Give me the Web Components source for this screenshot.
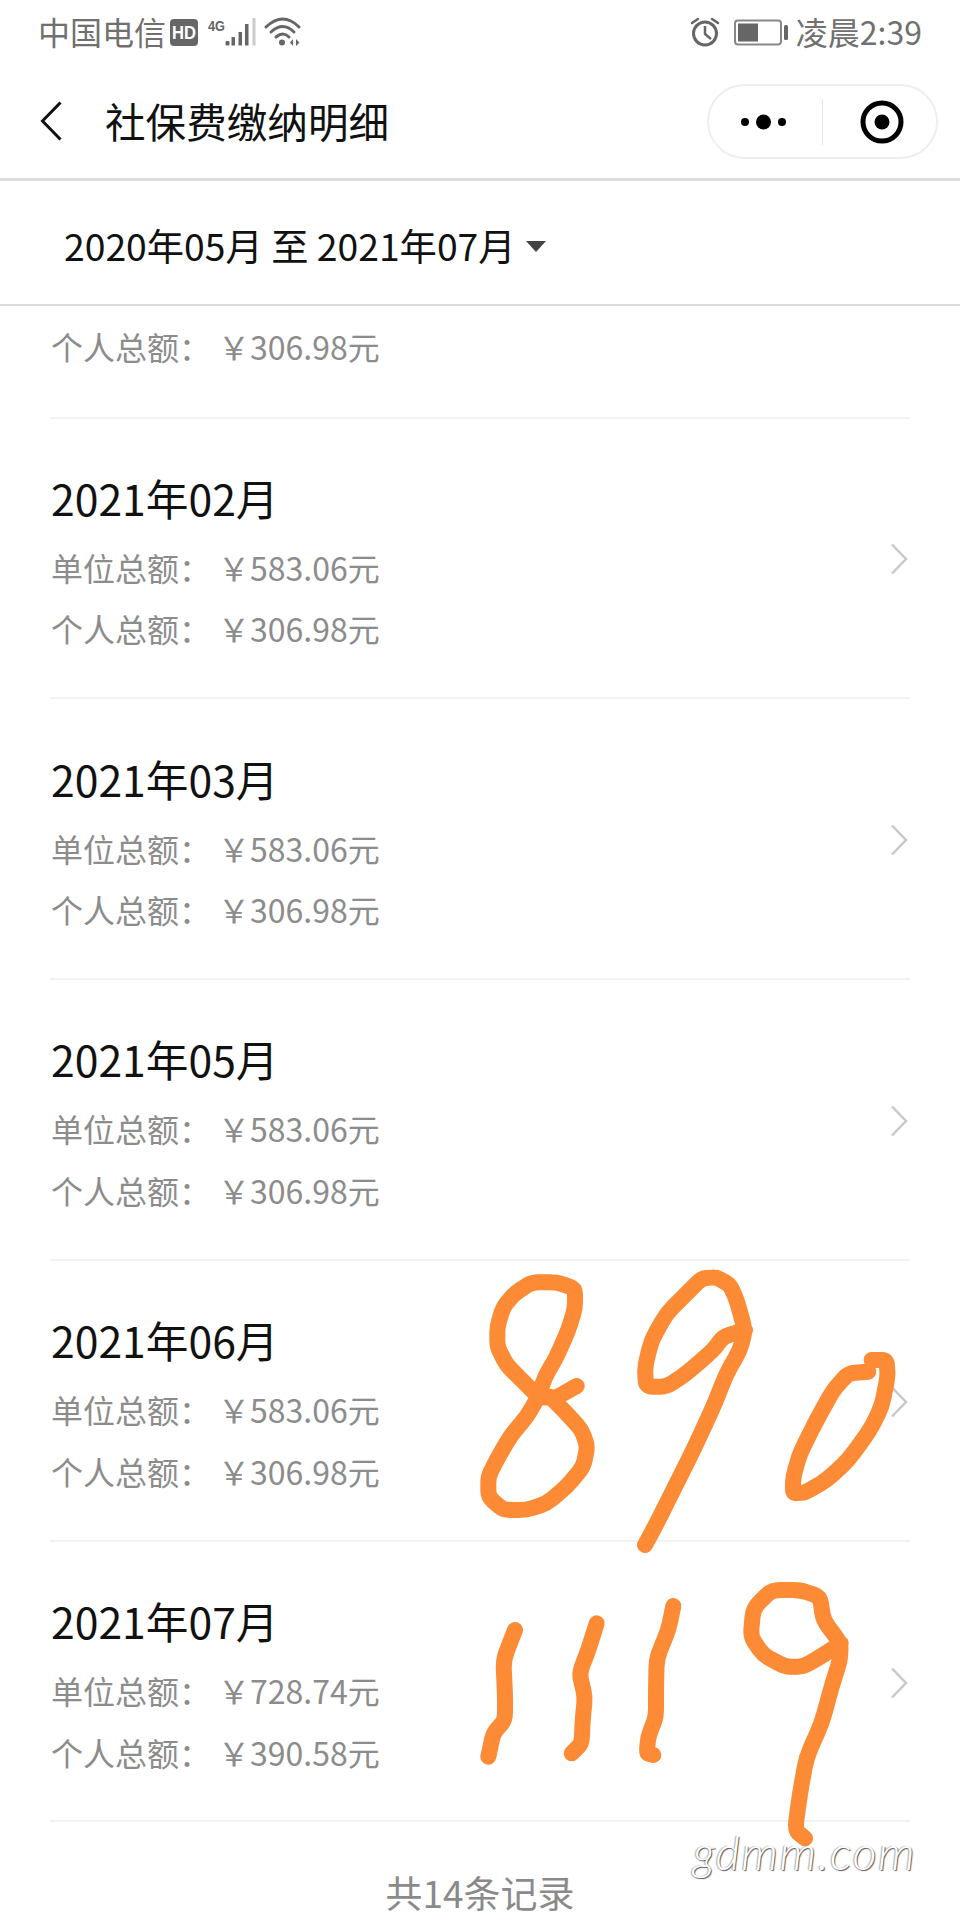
<!DOCTYPE html>
<html lang="zh">
<head>
<meta charset="utf-8">
<title>社保费缴纳明细</title>
<style>
    html, body { margin: 0; padding: 0; background: #fff; }
    body { width: 960px; height: 1920px; overflow: hidden; position: relative; font-family: "Noto Sans CJK SC", "Noto Sans", sans-serif; }
</style>
</head>
<body>
<status-bar></status-bar>
<nav-bar>社保费缴纳明细</nav-bar>
<date-filter>2020年05月 至 2021年07月</date-filter>
<record-list>
    <record-row partial personal="306.98"></record-row>
    <record-row month="2021年02月" company="583.06" personal="306.98"></record-row>
    <record-row month="2021年03月" company="583.06" personal="306.98"></record-row>
    <record-row month="2021年05月" company="583.06" personal="306.98"></record-row>
    <record-row month="2021年06月" company="583.06" personal="306.98"></record-row>
    <record-row month="2021年07月" company="728.74" personal="390.58"></record-row>
    <list-footer>共14条记录</list-footer>
</record-list>
<hand-scribble></hand-scribble>
<water-mark>gdmm.com</water-mark>

<script>
// status bar on top, grey icons
class StatusBar extends HTMLElement {
    constructor() {
        super();
        this.shadow = this.attachShadow({ mode: 'open' });
    }

    connectedCallback() {
        this.shadow.innerHTML = `
            <style>
                :host { display: flex; justify-content: space-between; align-items: center; height: 64px; padding: 0 38px; color: #707070; font-size: 32px; line-height: 40px; }
                .side { display: flex; align-items: center; }
                .txt { margin-top: -2px; }
                svg { display: block; }
            </style>
            <div class="side">
                <span class="txt">中国电信</span>
                <svg style="margin-left:4px" width="132" height="40" viewBox="170 12 132 40">
                    <rect x="170" y="19" width="28" height="27" rx="4" fill="#666"/>
                    <text x="184" y="39" text-anchor="middle" font-family="Liberation Sans" font-weight="700" font-size="19" textLength="24" lengthAdjust="spacingAndGlyphs" fill="#fff">HD</text>
                    <text x="208" y="31" font-family="Liberation Sans" font-weight="700" font-size="15" textLength="17" lengthAdjust="spacingAndGlyphs" fill="#666">4G</text>
                    <g fill="#666">
                        <rect x="225.500" y="41" width="4" height="4.500" rx="1"/>
                        <rect x="231.500" y="37" width="3.500" height="8.500"/>
                        <rect x="238.500" y="32" width="3.500" height="13.500"/>
                        <rect x="245" y="24" width="3.500" height="21.500"/>
                    </g>
                    <rect x="252.500" y="18" width="3" height="27.500" fill="#ccc"/>
                    <g fill="none" stroke="#666" stroke-width="3" stroke-linecap="round">
                        <path d="M266 27 Q283 11 299 27"/>
                        <path d="M271 32 Q283 21 294 32"/>
                        <path d="M276 37 Q283 31 289 37"/>
                    </g>
                    <circle cx="282" cy="42.500" r="3" fill="#666"/>
                    <path d="M293 39v7l-3-3.500zM296 39v7l3.500-3.500z" fill="#666"/>
                </svg>
            </div>
            <div class="side">
                <svg width="98" height="40" viewBox="690 12 98 40">
                    <g fill="none" stroke="#666">
                        <circle cx="705" cy="33.500" r="11.500" stroke-width="3"/>
                        <path d="M705 26v8l6 5" stroke-width="2.500"/>
                        <path d="M692 23l6-4M718 23l-6-4" stroke-width="2.500" stroke-linecap="round"/>
                        <rect x="735" y="20.500" width="46" height="24" rx="3" stroke="#888" stroke-width="2"/>
                    </g>
                    <rect x="738" y="23.500" width="20" height="18" fill="#666"/>
                    <rect x="784" y="25" width="4" height="15" rx="1.500" fill="#666"/>
                </svg>
                <span class="txt" style="margin-left:8px">凌晨2:39</span>
            </div>
        `;
    }
}

class NavBar extends HTMLElement {
    constructor() {
        super();
        this.shadow = this.attachShadow({ mode: 'open' });
    }

    connectedCallback() {
        this.shadow.innerHTML = `
            <style>
                :host { display: flex; align-items: center; height: 114px; border-bottom: 3px solid #dcdcdc; padding: 0 22px 0 40px; color: #111; }
                .title { font-size: 40.600px; line-height: 56px; margin-left: 43px; flex: 1; }
                svg { display: block; }
                .capsule { display: flex; align-items: center; box-sizing: border-box; width: 231px; height: 75px; border: 2px solid #eee; border-radius: 38px; margin-top: 1px; }
                .cell { box-sizing: border-box; width: 113px; flex: none; display: flex; justify-content: center; }
                .cell.left { padding-right: 3px; }
                .cell.right { padding-left: 5px; }
                .sep { width: 1px; height: 46px; flex: none; background: #e6e6e6; }
            </style>
            <svg width="22" height="40" viewBox="0 0 22 40"><path d="M20.500 1.500L2.500 20l18 18.500" fill="none" stroke="#111" stroke-width="3"/></svg>
            <span class="title"><slot></slot></span>
            <div class="capsule">
                <div class="cell left">
                    <svg width="46" height="16" viewBox="0 0 46 16" fill="#000"><circle cx="4" cy="8" r="4"/><circle cx="22.500" cy="8" r="7.500"/><circle cx="41" cy="8" r="4"/></svg>
                </div>
                <div class="sep"></div>
                <div class="cell right">
                    <svg width="44" height="44" viewBox="0 0 44 44"><circle cx="22" cy="22" r="19" fill="none" stroke="#000" stroke-width="5"/><circle cx="22" cy="22" r="7.500" fill="#000"/></svg>
                </div>
            </div>
        `;
    }
}

class DateFilter extends HTMLElement {
    constructor() {
        super();
        this.shadow = this.attachShadow({ mode: 'open' });
    }

    connectedCallback() {
        this.shadow.innerHTML = `
            <style>
                :host { display: flex; align-items: center; height: 119px; padding: 4px 0 0 64px; border-bottom: 2px solid #dcdcdc; font-size: 37.300px; color: #111; }
                .caret { width: 0; height: 0; margin: 4px 0 0 10px; border-left: 10px solid transparent; border-right: 10px solid transparent; border-top: 11px solid #444; }
            </style>
            <span><slot></slot></span>
            <span class="caret"></span>
        `;
    }
}

class RecordList extends HTMLElement {
    constructor() {
        super();
        this.shadow = this.attachShadow({ mode: 'open' });
    }

    connectedCallback() {
        this.shadow.innerHTML = `
            <style>
                :host { display: block; height: 1614px; overflow: hidden; padding: 0 50px; box-sizing: border-box; }
            </style>
            <slot></slot>
        `;
    }
}

class RecordRow extends HTMLElement {
    constructor() {
        super();
        this.shadow = this.attachShadow({ mode: 'open' });
    }

    connectedCallback() {
        const month = this.getAttribute('month');
        const company = this.getAttribute('company');
        const personal = this.getAttribute('personal');
        const partial = this.hasAttribute('partial');

        this.shadow.innerHTML = `
            <style>
                :host { display: flex; align-items: center; justify-content: space-between; height: 280.800px; box-sizing: border-box; padding: 13px 2px 0 1px; border-bottom: 2px solid #f2f2f2; }
                :host([partial]) { height: 112.500px; padding: 0 2px 0 1px; align-items: flex-start; }
                .title { font-size: 42.700px; line-height: 60px; color: #111; margin: -2px 0 10px; }
                .line { font-size: 32px; line-height: 61.500px; color: #8c8c8c; white-space: pre; }
                :host([partial]) .line { margin-top: 10px; }
                .cur { margin-left: 7px; }
                svg { display: block; margin-bottom: 10px; }
            </style>
            <div>
                ${partial ? '' : `
                    <div class="title">${month}</div>
                    <div class="line">单位总额：<span class="cur">￥</span>${company}元</div>
                `}
                <div class="line">个人总额：<span class="cur">￥</span>${personal}元</div>
            </div>
            ${partial ? '' : `<svg width="18" height="32" viewBox="0 0 18 32"><path d="M2 1.500L16 16 2 30.500" fill="none" stroke="#c8c8c8" stroke-width="2.500"/></svg>`}
        `;
    }
}

class ListFooter extends HTMLElement {
    constructor() {
        super();
        this.shadow = this.attachShadow({ mode: 'open' });
    }

    connectedCallback() {
        this.shadow.innerHTML = `
            <style>
                :host { display: block; text-align: center; font-size: 37px; line-height: 50px; padding-top: 45px; color: #8a8a8a; }
            </style>
            <slot></slot>
        `;
    }
}

// orange finger drawing that sits over the list
const STROKES = [
    // points were read off the reference at 3x, origin is the crop corner
    { x: 460, y: 1250, pts: [350,408, 285,445, 235,440, 190,395, 140,345, 112,290, 112,230, 130,170, 165,130, 215,97, 290,97, 345,115, 345,175, 325,240, 290,320, 255,380, 235,440, 200,500, 150,560, 110,630, 85,680, 85,740, 130,780, 200,780, 260,760, 320,710, 370,650, 382,590, 365,540, 320,490, 270,440] },
    { x: 460, y: 1250, pts: [555,885, 590,820, 640,720, 700,600, 760,470, 800,370, 840,300, 855,240, 830,150, 810,105, 770,82, 725,85, 680,130, 620,190, 575,270, 555,350, 558,410, 620,410, 680,370, 760,300, 790,260, 855,240] },
    { x: 460, y: 1250, pts: [1225,365, 1165,370, 1120,420, 1070,510, 1020,610, 1000,680, 998,730, 1035,728, 1100,690, 1165,630, 1230,540, 1265,470, 1283,380, 1280,330, 1235,330] },
    { x: 460, y: 1580, pts: [165,150, 130,240, 135,340, 135,420, 100,460, 85,530] },
    { x: 460, y: 1580, pts: [410,130, 385,210, 358,280, 375,350, 368,420, 365,490, 335,520] },
    { x: 460, y: 1580, pts: [640,78, 625,150, 590,235, 588,330, 588,410, 565,470, 560,520, 580,525] },
    { x: 460, y: 1580, pts: [1035,775, 1005,750, 1020,640, 1040,530, 1085,430, 1115,320, 1140,240, 1142,190, 1090,120, 1080,50, 1020,30, 935,30, 880,85, 872,170, 910,225, 975,260, 1030,260, 1090,225, 1142,190] }
];

// only the corners get rounded, the finger drawing stays a bit angular
function strokePath(s) {
    const p = [];
    for (let i = 0; i < s.pts.length; i += 2) {
        p.push([s.x + s.pts[i] / 3, s.y + s.pts[i + 1] / 3]);
    }
    const cut = 0.3;
    let d = `M${p[0][0]} ${p[0][1]}`;
    for (let i = 1; i < p.length - 1; i++) {
        const a = p[i - 1], b = p[i], c = p[i + 1];
        d += `L${b[0] + (a[0] - b[0]) * cut} ${b[1] + (a[1] - b[1]) * cut}`;
        d += `Q${b[0]} ${b[1]} ${b[0] + (c[0] - b[0]) * cut} ${b[1] + (c[1] - b[1]) * cut}`;
    }
    const last = p[p.length - 1];
    return d + `L${last[0]} ${last[1]}`;
}

class HandScribble extends HTMLElement {
    constructor() {
        super();
        this.shadow = this.attachShadow({ mode: 'open' });
    }

    connectedCallback() {
        this.shadow.innerHTML = `
            <style>
                :host { position: absolute; left: 0; top: 0; width: 960px; height: 1920px; pointer-events: none; }
                svg { display: block; }
                path { fill: none; stroke: #fd8a35; stroke-width: 16; stroke-linecap: round; stroke-linejoin: round; }
            </style>
            <svg width="960" height="1920" viewBox="0 0 960 1920">
                ${STROKES.map(s => `<path d="${strokePath(s)}"/>`).join('')}
            </svg>
        `;
    }
}

class WaterMark extends HTMLElement {
    constructor() {
        super();
        this.shadow = this.attachShadow({ mode: 'open' });
    }

    connectedCallback() {
        this.shadow.innerHTML = `
            <style>
                :host { position: absolute; left: 693px; top: 1823px; font-family: Lato, "Liberation Sans", sans-serif; font-style: italic; font-weight: 300; font-size: 47px; line-height: 58px; letter-spacing: 1.500px; color: #fff; text-shadow: 1px 1px 1px #555, -1px 0 1px #aaa; white-space: nowrap; }
            </style>
            <slot></slot>
        `;
    }
}

customElements.define('status-bar', StatusBar);
customElements.define('nav-bar', NavBar);
customElements.define('date-filter', DateFilter);
customElements.define('record-list', RecordList);
customElements.define('record-row', RecordRow);
customElements.define('list-footer', ListFooter);
customElements.define('hand-scribble', HandScribble);
customElements.define('water-mark', WaterMark);
</script>
</body>
</html>
